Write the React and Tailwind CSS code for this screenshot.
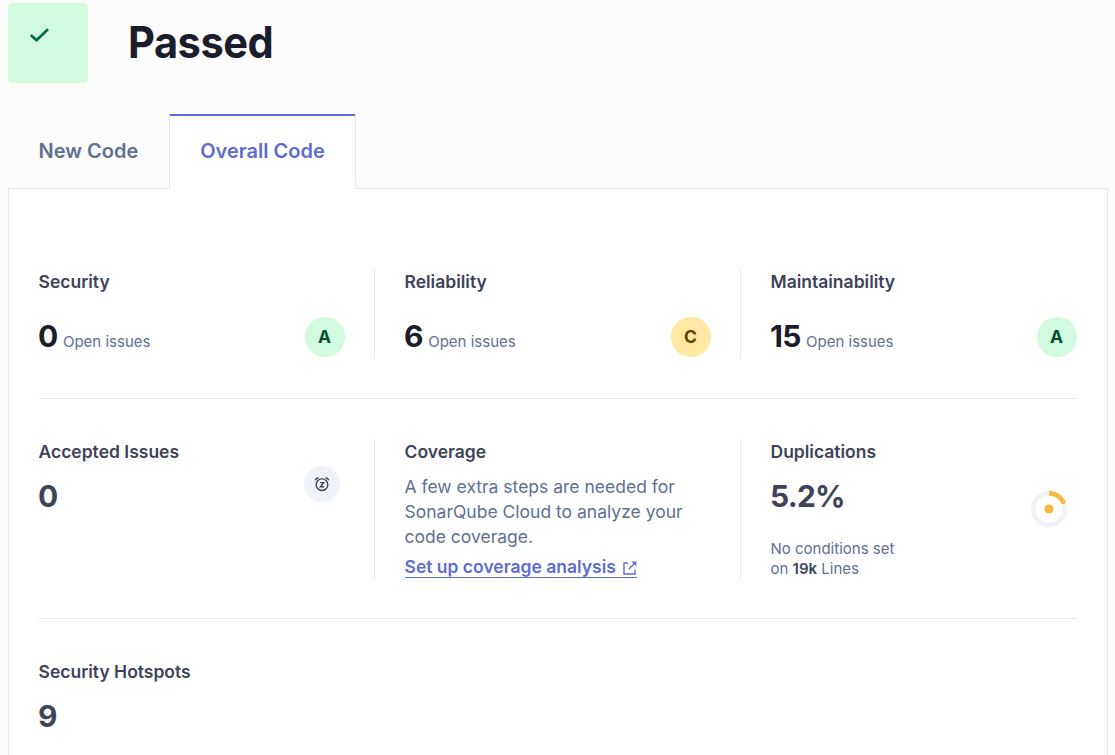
const inter = "font-['Inter',sans-serif]";

function Title({ children }) {
  return <h3 className="-ml-[0.5px] text-[17.5px] leading-[25px] font-semibold text-[#3e4357] whitespace-nowrap">{children}</h3>;
}

function Value({ children }) {
  return <p className="-ml-px mt-3 text-[30px] leading-10 font-[650] tracking-[-0.8px] text-[#3e4357]">{children}</p>;
}

function Rating({ letter, color }) {
  return <span className={`flex size-10 items-center justify-center rounded-full pr-px text-[17.5px] font-bold ${color}`}>{letter}</span>;
}

function IssueCard({ title, count, letter, color, border, row }) {
  return (
    <div className={`h-[90px] ${border}`}>
      <Title>{title}</Title>
      <div className={`mt-[23px] flex h-10 items-center justify-between ${row}`}>
        <div className="-ml-px flex items-baseline gap-[5.5px] pb-[2px]">
          <span className="text-[30px] leading-10 font-[650] tracking-[-0.8px] text-[#1b1d2c]">{count}</span>
          <span className="text-[15px] leading-5 text-[#616f93]">Open issues</span>
        </div>
        <Rating letter={letter} color={color} />
      </div>
    </div>
  );
}

export default function App() {
  return (
    <main className={`h-[755px] w-[1115px] overflow-hidden bg-[#fcfcfd] pl-2 pr-[7px] ${inter}`}>
      <header className="flex items-start gap-10 pt-[3px]">
        <div className="size-20 rounded bg-[#d1fadf]">
          <svg className="mt-[24px] ml-[20px]" width="24" height="17" viewBox="0 0 24 17" fill="none">
            <path d="M2.8 8 8.5 13.2 20 2.3" stroke="#056a41" strokeWidth="2.7" />
          </svg>
        </div>
        <h1 className="origin-left scale-x-[0.945] pt-[9px] text-[44px] leading-[60px] font-[650] tracking-[-0.5px] text-[#1b1d2c]">Passed</h1>
      </header>

      <nav className="mt-[30px] flex h-[76px] text-xl font-semibold">
        <button className="w-[161px] border-b border-[#e1e6f3] pl-[30.5px] text-left text-[#616f93]">New Code</button>
        <div className="flex w-[187px] pt-px">
          <button className="flex-1 rounded-t-xs border-x border-t-2 border-x-[#e1e6f3] border-t-[#5d6cd0] bg-white pb-[3px] text-center text-[#5d6cd0]">Overall Code</button>
        </div>
        <div className="flex-1 border-b border-[#e1e6f3]" />
      </nav>

      <section className="h-[600px] border-x border-[#e1e6f3] bg-white px-[30px] pt-[80px]">
        <div className="grid h-[130px] grid-cols-[336px_366px_336px] border-b border-[#e1e6f3]">
          <IssueCard title="Security" count="0" letter="A" color="bg-[#d1fadf] text-[#054f31]" border="border-r border-[#e1e6f3]" row="mr-[29px]" />
          <IssueCard title="Reliability" count="6" letter="C" color="bg-[#fde9a1] text-[#663c00]" border="border-r border-[#e1e6f3] pl-[30px]" row="mr-[29px]" />
          <IssueCard title="Maintainability" count="15" letter="A" color="bg-[#d1fadf] text-[#054f31]" border="pl-[30px]" row="" />
        </div>

        <div className="grid h-[220px] grid-cols-[336px_366px_336px] border-b border-[#e1e6f3] pt-10">
          <div className="flex h-[140px] justify-between border-r border-[#e1e6f3] pr-[34px]">
            <div>
              <Title>Accepted Issues</Title>
              <Value>0</Value>
            </div>
            <span className="mt-[27px] flex size-9 items-center justify-center rounded-full bg-[#eff2f9]">
              <svg width="16" height="16" viewBox="0 0 16 16" fill="none" stroke="#3e4357" strokeWidth="1.4">
                <circle cx="8" cy="8.7" r="5.8" />
                <path d="M1.2 4.2Q2 2.3 4.4 1.7M14.8 4.2Q14 2.3 11.6 1.7M6.1 6.6h3.6l-3.3 4.2h3.7" />
              </svg>
            </span>
          </div>
          <div className="h-[140px] border-r border-[#e1e6f3] pl-[30px]">
            <Title>Coverage</Title>
            <p className="-ml-[0.5px] mt-[10px] w-[300px] text-[17.5px] leading-[25px] text-[#616f93]">A few extra steps are needed for SonarQube Cloud to analyze your code coverage.</p>
            <a href="#" className="-ml-[0.5px] mt-[6px] inline-flex h-[23px] items-center border-b border-[#5d6cd0] pt-[2px] text-[17.5px] font-semibold text-[#5d6cd0]">
              Set up coverage analysis
              <svg className="ml-[7px] mt-px" width="14" height="14" viewBox="0 0 14 14" fill="none" stroke="currentColor" strokeWidth="1.4">
                <path d="M5.2 2H1v11h11V8.8M12.4 1.6 6 8" />
                <path d="M8.4 .5h5v5z" fill="currentColor" stroke="none" />
              </svg>
            </a>
          </div>
          <div className="flex h-[140px] justify-between pl-[30px] pr-[10px]">
            <div>
              <Title>Duplications</Title>
              <Value>5.2%</Value>
              <p className="-ml-[0.5px] mt-[23px] text-[15px] leading-5 text-[#616f93]">No conditions set<br />on <b className="font-semibold text-[#3e4357]">19k</b> Lines</p>
            </div>
            <svg className="mt-[52px]" width="36" height="36" viewBox="0 0 36 36" fill="none">
              <circle cx="18" cy="18" r="15.8" stroke="#eff2f9" strokeWidth="4.4" />
              <path d="M18 2.2A15.8 15.8 0 0 1 33 12.8" stroke="#f5b840" strokeWidth="4.4" />
              <circle cx="18" cy="18" r="4.6" fill="#f5b840" />
            </svg>
          </div>
        </div>

        <div className="pt-10">
          <Title>Security Hotspots</Title>
          <Value>9</Value>
        </div>
      </section>
    </main>
  );
}
